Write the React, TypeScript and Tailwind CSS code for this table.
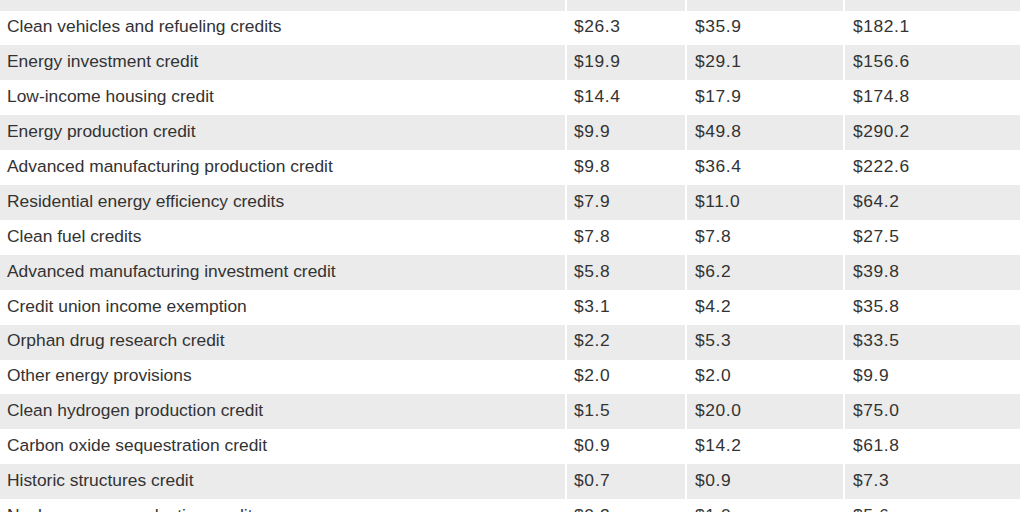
const rows: [string, string, string, string][] = [
  ["", "", "", ""],
  ["Clean vehicles and refueling credits", "$26.3", "$35.9", "$182.1"],
  ["Energy investment credit", "$19.9", "$29.1", "$156.6"],
  ["Low-income housing credit", "$14.4", "$17.9", "$174.8"],
  ["Energy production credit", "$9.9", "$49.8", "$290.2"],
  ["Advanced manufacturing production credit", "$9.8", "$36.4", "$222.6"],
  ["Residential energy efficiency credits", "$7.9", "$11.0", "$64.2"],
  ["Clean fuel credits", "$7.8", "$7.8", "$27.5"],
  ["Advanced manufacturing investment credit", "$5.8", "$6.2", "$39.8"],
  ["Credit union income exemption", "$3.1", "$4.2", "$35.8"],
  ["Orphan drug research credit", "$2.2", "$5.3", "$33.5"],
  ["Other energy provisions", "$2.0", "$2.0", "$9.9"],
  ["Clean hydrogen production credit", "$1.5", "$20.0", "$75.0"],
  ["Carbon oxide sequestration credit", "$0.9", "$14.2", "$61.8"],
  ["Historic structures credit", "$0.7", "$0.9", "$7.3"],
  ["Nuclear power production credits", "$0.2", "$1.0", "$5.6"],
];

export default function App() {
  return (
    <div className="h-[512px] w-[1024px] overflow-hidden bg-white font-['Liberation_Sans',Arial,sans-serif] text-[17.4px] leading-none text-[#333333]">
      <div className="mt-[-24.4px] w-[1020px]">
        {rows.map((row, i) => {
          const shade = i % 2 === 0 ? "bg-[#ebebeb]" : "bg-white";
          return (
            <div key={i} className="flex h-[34.92px] gap-[2px]">
              <div className={`flex w-[565px] items-center pb-[2px] pl-[7px] ${shade}`}>{row[0]}</div>
              <div className={`flex w-[118px] items-center pb-[2px] pl-[7px] tracking-[0.6px] ${shade}`}>{row[1]}</div>
              <div className={`flex w-[156px] items-center pb-[2px] pl-[8px] tracking-[0.6px] ${shade}`}>{row[2]}</div>
              <div className={`flex flex-1 items-center pb-[2px] pl-[8px] tracking-[0.6px] ${shade}`}>{row[3]}</div>
            </div>
          );
        })}
      </div>
    </div>
  );
}
